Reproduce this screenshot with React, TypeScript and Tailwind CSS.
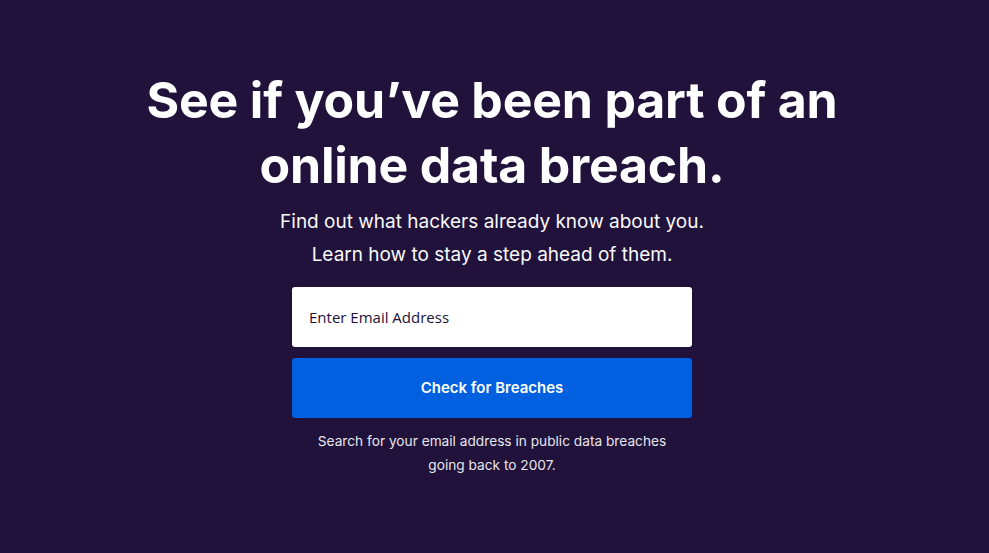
export default function App() {
  return (
    <main className="min-h-[553px] w-full bg-[#20123a] flex flex-col items-center pt-[68px] pr-[5px] text-white [font-family:Inter,'Noto_Sans',sans-serif]">
      <h1 className="text-center text-[50px] leading-[65px] font-bold tracking-[-0.2px] w-[720px]">
        See if you’ve been part of an online data breach.
      </h1>
      <div className="mt-[7px] text-center text-[19px] leading-[33px] text-[#f9f9fa]">
        <p>Find out what hackers already know about you.</p>
        <p>Learn how to stay a step ahead of them.</p>
      </div>
      <form className="mt-[16px] w-[400px] flex flex-col gap-[11px]">
        <input
          type="email"
          placeholder="Enter Email Address"
          className="h-[60px] w-full rounded-[3px] bg-white px-[17px] text-[15px] text-[#20123a] placeholder:text-[#20123a] outline-none [font-family:'Open_Sans',sans-serif]"
        />
        <button
          type="button"
          className="h-[60px] w-full rounded-[3px] bg-[#0060df] text-[15px] font-semibold text-white"
        >
          Check for Breaches
        </button>
      </form>
      <p className="mt-[11px] w-[360px] text-center text-[13.7px] leading-[24px] text-[#e7e5ec]">
        Search for your email address in public data breaches going back to 2007.
      </p>
    </main>
  );
}
